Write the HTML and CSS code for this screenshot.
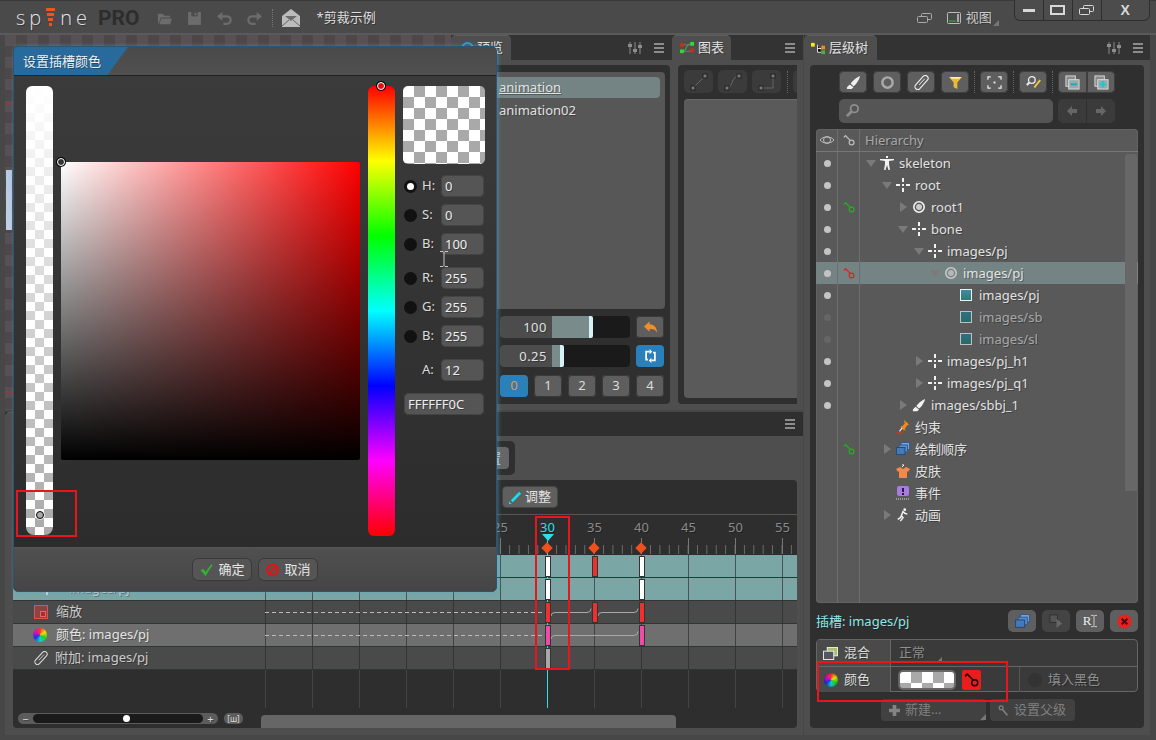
FILE: index.html
```html
<!DOCTYPE html>
<html lang="zh">
<head>
<meta charset="utf-8">
<title>Spine</title>
<link rel="stylesheet" href="styles.css">
</head>
<body>
<svg class="sprite" xmlns="http://www.w3.org/2000/svg">
  <symbol id="bone" viewBox="0 0 14 14"><path fill="currentColor" d="M0 6h4v2H0zM10 6h4v2h-4zM6 0h2v4H6zM6 10h2v4H6zM6 6h2v2H6z"/></symbol>
  <symbol id="slot" viewBox="0 0 14 14"><circle cx="7" cy="7" r="5.2" fill="none" stroke="currentColor" stroke-width="1.6"/><circle cx="7" cy="7" r="3" fill="currentColor" opacity=".75"/></symbol>
  <symbol id="key" viewBox="0 0 14 14"><path fill="none" stroke="currentColor" stroke-width="1.4" d="M1 4 3 2l6 6"/><circle cx="10" cy="10" r="2.8" fill="none" stroke="currentColor" stroke-width="1.4"/></symbol>
  <symbol id="brush" viewBox="0 0 16 16"><path fill="currentColor" d="M15 1C12 2 7 6 5 9l3 3c3-2 6-7 7-11zM4 10 1 13v2h5l2-2z"/></symbol>
  <symbol id="ring" viewBox="0 0 16 16"><circle cx="8" cy="8" r="5.5" fill="none" stroke="currentColor" stroke-width="2.6"/></symbol>
  <symbol id="clip" viewBox="0 0 16 16"><rect x="5" y="-1" width="6" height="18" rx="3" transform="rotate(42 8 8)" fill="none" stroke="currentColor" stroke-width="1.2"/><path fill="none" stroke="currentColor" d="m5.500 10.500 6-6.500"/></symbol>
  <symbol id="funnel" viewBox="0 0 16 16"><path fill="#e9b938" d="M1 2h14l-5 6v7l-4-2V8z"/><path fill="#fff0a8" d="M2 2h12l-2 2H4z"/></symbol>
  <symbol id="focus" viewBox="0 0 16 16"><path fill="none" stroke="currentColor" stroke-width="1.3" d="M1 5V2h3M12 2h3v3M15 11v3h-3M4 14H1v-3"/><rect x="7" y="7" width="2" height="2" fill="currentColor"/></symbol>
  <symbol id="magpen" viewBox="0 0 18 16"><circle cx="7" cy="5" r="4" fill="none" stroke="#eee" stroke-width="1.6"/><path stroke="#eee" stroke-width="2.400" d="M4 8 1 11"/><path stroke="#f3c63c" stroke-width="2.400" d="m17 5-7 9"/></symbol>
  <symbol id="minusdoc" viewBox="0 0 16 16"><rect x="1" y="1" width="10" height="11" fill="#8a8a8a" stroke="#ddd"/><rect x="4" y="5" width="11" height="10" fill="#9aa" stroke="#ddd"/><rect x="6" y="9" width="7" height="2" fill="#18a9c4"/></symbol>
  <symbol id="plusdoc" viewBox="0 0 16 16"><rect x="1" y="1" width="10" height="11" fill="#8a8a8a" stroke="#ddd"/><rect x="4" y="5" width="11" height="10" fill="#9aa" stroke="#ddd"/><path fill="#18c9d4" d="M6 9h2.500V6.500h2V9H13v2h-2.500v2.500h-2V11H6z"/></symbol>
  <symbol id="arrl" viewBox="0 0 12 12"><path fill="currentColor" d="M6 1v3h5v4H6v3L1 6z"/></symbol>
  <symbol id="arrr" viewBox="0 0 12 12"><path fill="currentColor" d="M6 1v3H1v4h5v3l5-5z"/></symbol>
  <symbol id="search" viewBox="0 0 16 16"><circle cx="10" cy="6" r="4" fill="none" stroke="currentColor" stroke-width="2"/><path stroke="currentColor" stroke-width="3" d="M7 9 2 14"/></symbol>
  <symbol id="eye" viewBox="0 0 16 12"><path fill="none" stroke="currentColor" d="M1 6c3-4 11-4 14 0-3 4-11 4-14 0z"/><circle cx="8" cy="6" r="3.500" fill="none" stroke="currentColor"/></symbol>
  <symbol id="skel" viewBox="0 0 14 14"><path fill="currentColor" d="M6 0h2v2H6zM0 3h14v1.200L9 5v3l1 6H8.500L7 9l-1.500 5H4l1-6V5L0 4.200z"/></symbol>
  <symbol id="pin" viewBox="0 0 14 16"><path fill="#ef8a1e" d="M8 0l6 5-2 1-3 4 1 2-3-1-3-4 2 0 3-3z"/><path stroke="#eee" stroke-width="1.300" d="M6 9 3 13"/><path fill="none" stroke="#c3410f" stroke-width="1.500" d="M0 14c1 2 6 2 8-2"/></symbol>
  <symbol id="order" viewBox="0 0 14 14"><rect x="5" y="0.500" width="8.500" height="7" fill="#7aa6de" stroke="#315a90"/><rect x="3" y="3" width="8.500" height="7" fill="#5d8ecb" stroke="#315a90"/><rect x="0.500" y="5.500" width="8.500" height="7" fill="#4579b8" stroke="#274a78"/></symbol>
  <symbol id="shirt" viewBox="0 0 14 14"><path fill="#f08a4a" d="M4 3 0 5l2 3 1-1v7h8V7l1 1 2-3-4-2-3 2z"/><path stroke="#fff" d="M6 3 8 1H6"/></symbol>
  <symbol id="event" viewBox="0 0 14 14"><rect x="1" y="0" width="12" height="10" rx="2" fill="#a97ae0"/><path fill="#2b1a40" d="M6 2h2v4H6zM6 7h2v2H6z"/><path stroke="#ddd" stroke-dasharray="1 1" d="M0 13h14"/></symbol>
  <symbol id="run" viewBox="0 0 14 16"><circle cx="9" cy="2" r="1.600" fill="currentColor"/><path fill="none" stroke="currentColor" stroke-width="1.700" d="M12 7 9 6 7 4 5 9l2 2-3 4M5 9l-1 2-3 2"/></symbol>
  <symbol id="menu" viewBox="0 0 10 10"><path fill="currentColor" d="M0 0h10v2H0zM0 4h10v2H0zM0 8h10v2H0z"/></symbol>
  <symbol id="sliders" viewBox="0 0 14 12"><path stroke="currentColor" d="M2 0v12M7 0v12M12 0v12"/><path fill="currentColor" d="M0 2h4v3H0zM5 7h4v3H5zM10 3h4v3h-4z"/></symbol>
  <symbol id="folder" viewBox="0 0 16 14"><path fill="currentColor" d="M1 2h5l2 2h6v2H4L2 12H1zM4.500 7H16l-2 6H2.500z"/></symbol>
  <symbol id="save" viewBox="0 0 14 14"><path fill="currentColor" d="M1 1h12v12H1z"/><path fill="#4a4a4a" d="M4 1h6v4H4z"/><path fill="currentColor" d="M7 2h2v2H7z"/></symbol>
  <symbol id="undo" viewBox="0 0 14 14"><path fill="none" stroke="currentColor" stroke-width="2" d="M4 5h5c5 0 5 7 0 7H6"/><path fill="currentColor" d="M5 1v8L0 5z"/></symbol>
  <symbol id="redo" viewBox="0 0 14 14"><path fill="none" stroke="currentColor" stroke-width="2" d="M10 5H5c-5 0-5 7 0 7h3"/><path fill="currentColor" d="M9 1v8l5-4z"/></symbol>
  <symbol id="mail" viewBox="0 0 18 18"><path fill="#bbb" d="M0 7 9 0l9 7v11H0z"/><path fill="#6a6a6a" d="M3 7h12l-6 5z"/><path fill="none" stroke="#666" d="M0 17l7-6M18 17l-7-6"/></symbol>
  <symbol id="win" viewBox="0 0 15 12"><rect x="4.500" y="1.500" width="10" height="6" rx="1" fill="none" stroke="currentColor"/><rect x="0.500" y="4.500" width="10" height="6" rx="1" fill="#4a4a4a" stroke="currentColor"/></symbol>
  <symbol id="view" viewBox="0 0 14 12"><rect x="0.500" y="0.500" width="13" height="11" rx="1" fill="none" stroke="#bbb"/><rect x="2" y="8" width="7" height="2" fill="#3e7f3e"/><rect x="10" y="2" width="2" height="8" fill="#aaa"/></symbol>
  <symbol id="tree" viewBox="0 0 16 12"><rect width="4" height="4" fill="#f4ec1a"/><path stroke="#eee" d="M7 2v8h4M7 6h4"/><rect x="11" y="3" width="4" height="4" fill="#ef8a1e"/><rect x="11" y="8" width="4" height="4" fill="#4caf3a"/></symbol>
  <symbol id="graph" viewBox="0 0 16 14"><path fill="none" stroke="#3ecb3e" d="M3 10c4 0 3-8 9-8"/><path stroke="#777" d="M3 3h9M3 10h9"/><rect x="0" y="8" width="4" height="4" fill="#2fdc2f"/><rect x="11" y="0" width="4" height="4" fill="#2fdc2f"/><rect x="0" y="1" width="4" height="4" fill="#c9300f"/><rect x="11" y="7" width="4" height="4" fill="#c9300f"/></symbol>
  <symbol id="back" viewBox="0 0 16 14"><path fill="#ef8f2a" d="M7 1v3c4 0 8 3 8 9-2-4-5-4-8-4v3L1 6.500z"/></symbol>
  <symbol id="loop" viewBox="0 0 16 16"><path fill="none" stroke="#fff" stroke-width="2" d="M7 3H3v9h2M9 13h4V4h-2"/><path fill="#fff" d="M7 0v6l3-3zM9 10v6l-3-3z"/></symbol>
  <symbol id="pencil" viewBox="0 0 14 14"><path stroke="#18dce8" stroke-width="3" d="M12 2 3 11"/><path fill="#18dce8" d="M0 14v-3l3 3z"/></symbol>
  <symbol id="check" viewBox="0 0 14 14"><path fill="#2fb52f" d="M1 7l3-1 2 3 6-8 1 1-7 11z"/></symbol>
  <symbol id="stop" viewBox="0 0 16 16"><circle cx="8" cy="8" r="6" fill="none" stroke="#e21414" stroke-width="2.500"/><path stroke="#e21414" stroke-width="2.500" d="m4 12 8-8"/></symbol>
  <symbol id="scale" viewBox="0 0 14 14"><rect x="0.500" y="0.500" width="13" height="13" fill="#8a4444" stroke="#e25050"/><rect x="6.500" y="6.500" width="5" height="5" fill="#a13030" stroke="#f06060"/></symbol>
  <symbol id="blend" viewBox="0 0 16 14"><rect x="4.500" y="0.500" width="11" height="9" fill="#a8c070" stroke="#eee"/><rect x="0.500" y="4.500" width="11" height="9" fill="#556" stroke="#eee"/></symbol>
  <symbol id="close" viewBox="0 0 16 16"><circle cx="8" cy="8" r="7.500" fill="#e82020"/><path stroke="#401010" stroke-width="2.200" d="m5 5 6 6M11 5l-6 6"/></symbol>
  <symbol id="dup" viewBox="0 0 16 16"><rect x="1" y="1" width="8" height="8" fill="#555" stroke="#2f2f2f"/><path fill="#666" d="M8 5l6 5-6 5z"/></symbol>
  <symbol id="plus" viewBox="0 0 12 12"><path fill="currentColor" d="M4 0h4v4h4v4H8v4H4V8H0V4h4z"/></symbol>
  <symbol id="parent" viewBox="0 0 14 14"><circle cx="4" cy="3.500" r="2.500" fill="none" stroke="currentColor" stroke-width="1.500"/><path stroke="currentColor" stroke-width="2" d="m6 6 6 7"/></symbol>
  <symbol id="ibeam" viewBox="0 0 8 16"><path fill="none" stroke="currentColor" d="M0 .5h3l1 1 1-1h3M4 1.500v13M0 15.500h3l1-1 1 1h3"/></symbol>
</svg>

<div class="app">
  <header class="topbar">
    <div class="logo"><span>sp</span><svg class="logo-i" viewBox="0 0 9 20"><path fill="#f0531c" d="M0 0h9v3H0zM1 5h7v3H1zM2 10h5v3H2zM3 15h3v3H3z"/></svg><span>ne</span></div>
    <div class="pro">PRO</div>
    <svg class="tool tool-folder"><use href="#folder"/></svg>
    <svg class="tool tool-save"><use href="#save"/></svg>
    <svg class="tool tool-undo"><use href="#undo"/></svg>
    <svg class="tool tool-redo"><use href="#redo"/></svg>
    <i class="dots"></i>
    <svg class="tool-mail"><use href="#mail"/></svg>
    <span class="doc-title">*剪裁示例</span>
    <svg class="win-ic"><use href="#win"/></svg>
    <svg class="view-ic"><use href="#view"/></svg>
    <span class="view-label">视图</span>
    <i class="corner"></i>
    <div class="winctl">
      <button class="wc"><i class="wc-min"></i></button>
      <button class="wc"><i class="wc-max"></i></button>
      <button class="wc"><svg class="wc-rest"><use href="#win"/></svg></button>
      <button class="wc wc-x">X</button>
    </div>
  </header>

  <div class="workspace">
    <div class="left">
      <div class="toprow">
        <div class="viewport"></div>

        <section class="panel preview">
          <div class="tabbar">
            <div class="tab tab-preview"><i class="eye-blue"></i><span class="tab-text">预览</span></div>
            <svg class="tb-sliders"><use href="#sliders"/></svg>
            <svg class="tb-menu"><use href="#menu"/></svg>
          </div>
          <div class="panel-body preview-body">
            <div class="inner preview-inner">
              <div class="anim-list">
                <div class="anim anim-on"><u>animation</u></div>
                <div class="anim">animation02</div>
              </div>
              <div class="ctrl ctrl-1">
                <div class="slider"><span class="sl-val">100</span><div class="sl-track"><i class="sl-fill fill-100"></i></div></div>
                <button class="cbtn"><svg class="cb-ic"><use href="#back"/></svg></button>
              </div>
              <div class="ctrl ctrl-2">
                <div class="slider"><span class="sl-val">0.25</span><div class="sl-track"><i class="sl-fill fill-25"></i></div></div>
                <button class="cbtn cbtn-blue"><svg class="cb-ic"><use href="#loop"/></svg></button>
              </div>
              <div class="ctrl ctrl-3">
                <button class="cbtn cbtn-blue num-on">0</button>
                <button class="cbtn">1</button>
                <button class="cbtn">2</button>
                <button class="cbtn">3</button>
                <button class="cbtn">4</button>
              </div>
            </div>
          </div>
        </section>

        <section class="panel graph">
          <div class="tabbar">
            <div class="tab tab-graph"><svg class="tab-ic"><use href="#graph"/></svg><span class="tab-text">图表</span></div>
            <svg class="tb-menu tb-menu-graph"><use href="#menu"/></svg>
          </div>
          <div class="panel-body graph-body">
            <div class="inner graph-inner">
              <div class="graph-tools">
                <button class="gbtn"><svg class="gb-ic" viewBox="0 0 20 20"><path stroke="#666" d="m4 16 12-12"/><rect x="2" y="14" width="4" height="4" fill="#777" stroke="#222"/><rect x="14" y="2" width="4" height="4" fill="#777" stroke="#222"/></svg></button>
                <button class="gbtn"><svg class="gb-ic" viewBox="0 0 20 20"><path fill="none" stroke="#666" d="M4 16c6 0 4-12 12-12"/><rect x="2" y="14" width="4" height="4" fill="#777" stroke="#222"/><rect x="14" y="2" width="4" height="4" fill="#777" stroke="#222"/></svg></button>
                <button class="gbtn"><svg class="gb-ic" viewBox="0 0 20 20"><path fill="none" stroke="#666" d="M4 16h12V4"/><rect x="2" y="14" width="4" height="4" fill="#777" stroke="#222"/><rect x="14" y="2" width="4" height="4" fill="#777" stroke="#222"/></svg></button>
                <i class="vdots vdots-graph"></i>
                <button class="gbtn gbtn-cut"></button>
              </div>
              <div class="graph-box"></div>
            </div>
          </div>
        </section>
      </div>

      <section class="panel timeline">
        <div class="tabbar tabbar-tl">
          <div class="tab tab-tl"></div>
          <svg class="tb-menu tb-menu-graph"><use href="#menu"/></svg>
        </div>
        <div class="tl-body">
          <div class="tl-group"><button class="tl-groupbtn">设置</button></div>
          <div class="tl-box">
            <div class="tl-toolbar"><button class="adjust"><svg class="adjust-ic"><use href="#pencil"/></svg>调整</button></div>
            <div class="tl-grid">
              <div class="ruler">
                <div class="ruler-track">
                  <div class="ruler-labels">
                    <span>25</span><span class="now">30</span><span>35</span><span>40</span><span>45</span><span>50</span><span>55</span>
                  </div>
                  <i class="dia dia-30"></i><i class="dia dia-35"></i><i class="dia dia-40"></i>
                </div>
              </div>
              <div class="row row-teal"><div class="rname"></div><div class="track">
                <i class="key k30 white"></i><i class="key k35 red"></i><i class="key k40 white"></i>
              </div></div>
              <div class="row row-teal"><div class="rname"><svg class="rn-bone"><use href="#bone"/></svg><span class="rn-text rn-t1">images/pj</span></div><div class="track">
                <i class="key k30 white"></i><i class="key k40 white"></i>
              </div></div>
              <div class="row row-dark"><div class="rname"><svg class="rn-ic"><use href="#scale"/></svg><span class="rn-text rn-t2">缩放</span></div><div class="track">
                <svg class="curve"><path class="dash" d="M0 11.500H280"/><path d="M286 15q0-3.500 4-3.500H322q4 0 4-4"/><path d="M333 15q0-3.500 4-3.500H369q4 0 4-4"/></svg>
                <i class="key k30 red"></i><i class="key k35 red"></i><i class="key k40 red"></i>
              </div></div>
              <div class="row row-mid"><div class="rname"><i class="wheel rn-wheel"></i><span class="rn-text rn-t3">颜色: images/pj</span></div><div class="track">
                <svg class="curve"><path class="dash" d="M0 11.500H280"/><path d="M286 15q0-3.500 4-3.500H369q4 0 4-4"/></svg>
                <i class="key k30 pink"></i><i class="key k40 pink"></i>
              </div></div>
              <div class="row row-dark"><div class="rname"><svg class="rn-ic"><use href="#clip"/></svg><span class="rn-text rn-t4">附加: images/pj</span></div><div class="track">
                <i class="key k30 grey"></i>
              </div></div>
              <div class="row-empty"><div class="rname"></div><div class="track"></div></div>
              <i class="playhead"></i>
              <i class="cursor"></i>
            </div>
            <div class="tl-foot">
              <div class="zoomer"><span class="z-sign">−</span><div class="z-track"><i class="z-knob"></i></div><span class="z-sign">+</span></div>
              <button class="zfit">[ш]</button>
              <div class="hscroll"></div>
            </div>
          </div>
        </div>
      </section>
    </div>

    <section class="panel right">
      <div class="tabbar">
        <div class="tab tab-tree"><svg class="tab-ic"><use href="#tree"/></svg><span class="tab-text">层级树</span></div>
        <svg class="tb-sliders tb-sliders-r"><use href="#sliders"/></svg>
        <svg class="tb-menu tb-menu-r"><use href="#menu"/></svg>
      </div>
      <div class="panel-body right-body">
        <div class="inner right-inner">
          <div class="rtools">
            <button class="rbtn"><svg class="ri"><use href="#brush"/></svg></button>
            <button class="rbtn"><svg class="ri ri-ring"><use href="#ring"/></svg></button>
            <button class="rbtn"><svg class="ri"><use href="#clip"/></svg></button>
            <button class="rbtn"><svg class="ri"><use href="#funnel"/></svg></button>
            <i class="vdots"></i>
            <button class="rbtn"><svg class="ri"><use href="#focus"/></svg></button>
            <i class="vdots"></i>
            <button class="rbtn"><svg class="ri"><use href="#magpen"/></svg></button>
            <i class="vdots"></i>
            <div class="rbtn-join">
              <button class="rbtn"><svg class="ri"><use href="#minusdoc"/></svg></button>
              <button class="rbtn"><svg class="ri"><use href="#plusdoc"/></svg></button>
            </div>
          </div>
          <div class="rsearch">
            <div class="searchbox"><svg class="search-ic"><use href="#search"/></svg></div>
            <div class="navbtns"><button class="nav"><svg class="nav-ic"><use href="#arrl"/></svg></button><button class="nav"><svg class="nav-ic"><use href="#arrr"/></svg></button></div>
          </div>

          <div class="tree">
            <div class="tr tr-head">
              <div class="c-eye"><svg class="h-eye"><use href="#eye"/></svg></div>
              <div class="c-key"><svg class="h-key"><use href="#key"/></svg></div>
              <div class="c-name head-name">Hierarchy</div>
            </div>
            <div class="tr"><div class="c-eye"><i class="dot"></i></div><div class="c-key"></div><div class="c-name d0"><i class="ar ar-down"></i><svg class="ti"><use href="#skel"/></svg><span class="tl">skeleton</span></div></div>
            <div class="tr"><div class="c-eye"><i class="dot"></i></div><div class="c-key"></div><div class="c-name d1"><i class="ar ar-down"></i><svg class="ti"><use href="#bone"/></svg><span class="tl">root</span></div></div>
            <div class="tr"><div class="c-eye"><i class="dot"></i></div><div class="c-key"><svg class="tkey green"><use href="#key"/></svg></div><div class="c-name d2"><i class="ar ar-right"></i><svg class="ti"><use href="#slot"/></svg><span class="tl">root1</span></div></div>
            <div class="tr"><div class="c-eye"><i class="dot"></i></div><div class="c-key"></div><div class="c-name d2"><i class="ar ar-down"></i><svg class="ti"><use href="#bone"/></svg><span class="tl">bone</span></div></div>
            <div class="tr"><div class="c-eye"><i class="dot"></i></div><div class="c-key"></div><div class="c-name d3"><i class="ar ar-down"></i><svg class="ti"><use href="#bone"/></svg><span class="tl">images/pj</span></div></div>
            <div class="tr tr-on"><div class="c-eye"><i class="dot"></i></div><div class="c-key"><svg class="tkey redk"><use href="#key"/></svg></div><div class="c-name d4"><i class="ar ar-down"></i><svg class="ti ti-grey"><use href="#slot"/></svg><span class="tl">images/pj</span></div></div>
            <div class="tr"><div class="c-eye"><i class="dot"></i></div><div class="c-key"></div><div class="c-name d5"><i class="ar ar-none"></i><i class="att"></i><span class="tl">images/pj</span></div></div>
            <div class="tr"><div class="c-eye"><i class="dot dot-off"></i></div><div class="c-key"></div><div class="c-name d5"><i class="ar ar-none"></i><i class="att att-dim"></i><span class="tl tl-dim">images/sb</span></div></div>
            <div class="tr"><div class="c-eye"><i class="dot dot-off"></i></div><div class="c-key"></div><div class="c-name d5"><i class="ar ar-none"></i><i class="att att-dim"></i><span class="tl tl-dim">images/sl</span></div></div>
            <div class="tr"><div class="c-eye"><i class="dot"></i></div><div class="c-key"></div><div class="c-name d3"><i class="ar ar-right"></i><svg class="ti"><use href="#bone"/></svg><span class="tl">images/pj_h1</span></div></div>
            <div class="tr"><div class="c-eye"><i class="dot"></i></div><div class="c-key"></div><div class="c-name d3"><i class="ar ar-right"></i><svg class="ti"><use href="#bone"/></svg><span class="tl">images/pj_q1</span></div></div>
            <div class="tr"><div class="c-eye"><i class="dot"></i></div><div class="c-key"></div><div class="c-name d2"><i class="ar ar-right"></i><svg class="ti"><use href="#brush"/></svg><span class="tl">images/sbbj_1</span></div></div>
            <div class="tr"><div class="c-eye"></div><div class="c-key"></div><div class="c-name d1"><i class="ar ar-none"></i><svg class="ti"><use href="#pin"/></svg><span class="tl">约束</span></div></div>
            <div class="tr"><div class="c-eye"></div><div class="c-key"><svg class="tkey green"><use href="#key"/></svg></div><div class="c-name d1"><i class="ar ar-right"></i><svg class="ti"><use href="#order"/></svg><span class="tl">绘制顺序</span></div></div>
            <div class="tr"><div class="c-eye"></div><div class="c-key"></div><div class="c-name d1"><i class="ar ar-none"></i><svg class="ti"><use href="#shirt"/></svg><span class="tl">皮肤</span></div></div>
            <div class="tr"><div class="c-eye"></div><div class="c-key"></div><div class="c-name d1"><i class="ar ar-none"></i><svg class="ti"><use href="#event"/></svg><span class="tl">事件</span></div></div>
            <div class="tr"><div class="c-eye"></div><div class="c-key"></div><div class="c-name d1"><i class="ar ar-right"></i><svg class="ti"><use href="#run"/></svg><span class="tl">动画</span></div></div>
            <div class="tr tr-fill"><div class="c-eye"></div><div class="c-key"></div><div class="c-name"></div></div>
            <i class="vscroll"></i>
          </div>

          <div class="slotbar">
            <span class="slot-label">插槽: images/pj</span>
            <button class="sbtn"><svg class="si"><use href="#order"/></svg></button>
            <button class="sbtn sbtn-off"><svg class="si"><use href="#dup"/></svg></button>
            <button class="sbtn sbtn-r">R<svg class="si-beam"><use href="#ibeam"/></svg></button>
            <button class="sbtn"><svg class="si"><use href="#close"/></svg></button>
          </div>

          <div class="props">
            <div class="prow">
              <div class="plabel"><svg class="p-ic"><use href="#blend"/></svg>混合</div>
              <div class="pval pval-blend">正常<i class="corner corner-p"></i></div>
            </div>
            <div class="prow prow-2">
              <div class="plabel"><i class="wheel p-wheel"></i>颜色</div>
              <div class="pval pval-color"><i class="swatch"></i><button class="redkey"><svg class="redkey-ic"><use href="#key"/></svg></button></div>
              <div class="pval pval-fill"><i class="fillbox"></i><span>填入黑色</span></div>
            </div>
          </div>

          <div class="newbar">
            <button class="nbtn nbtn-new"><svg class="n-ic"><use href="#plus"/></svg>新建...<i class="corner corner-n"></i></button>
            <button class="nbtn nbtn-par"><svg class="n-ic"><use href="#parent"/></svg>设置父级</button>
          </div>
        </div>
      </div>
    </section>
  </div>

  <div class="dialog">
    <div class="dlg-head"><div class="dlg-title">设置插槽颜色</div></div>
    <div class="dlg-body">
      <div class="alpha"><i class="handle h-alpha"></i></div>
      <div class="sv"><i class="handle h-sv"></i></div>
      <div class="hue"><i class="handle h-hue"></i></div>
      <div class="dlg-side">
        <div class="swatch-big"></div>
        <div class="crow crow-first"><i class="radio radio-on"></i><label>H:</label><span class="cinput">0</span></div>
        <div class="crow"><i class="radio"></i><label>S:</label><span class="cinput">0</span></div>
        <div class="crow"><i class="radio"></i><label>B:</label><span class="cinput">100</span></div>
        <div class="crow crow-gap"><i class="radio"></i><label>R:</label><span class="cinput">255</span></div>
        <div class="crow"><i class="radio"></i><label>G:</label><span class="cinput">255</span></div>
        <div class="crow"><i class="radio"></i><label>B:</label><span class="cinput">255</span></div>
        <div class="crow crow-gap"><i class="radio radio-none"></i><label>A:</label><span class="cinput">12</span></div>
        <div class="crow crow-gap"><span class="cinput cinput-hex">FFFFFF0C</span></div>
      </div>
    </div>
    <div class="dlg-foot">
      <button class="dbtn"><svg class="d-ic"><use href="#check"/></svg>确定</button>
      <button class="dbtn"><svg class="d-ic"><use href="#stop"/></svg>取消</button>
    </div>
    <svg class="dlg-beam"><use href="#ibeam"/></svg>
  </div>

  <i class="redbox rb-alpha"></i>
  <i class="redbox rb-key"></i>
  <i class="redbox rb-prop"></i>
</div>
</body>
</html>
```
FILE: styles.css
```css
*{box-sizing:border-box}
html,body{margin:0;padding:0;height:100%;background:#454545}
body{font:13px/1.2 "Noto Sans","Noto Sans CJK SC",sans-serif;color:#e2e2e2}
.sprite{display:block;width:0;height:0;overflow:hidden}
svg{display:block;flex:none}
button{font:inherit;color:inherit;border:0;padding:0;margin:0}
i{display:block;font-style:normal}
.app{width:1156px;height:740px;position:relative;overflow:hidden;display:flex;flex-direction:column;background:#474747;text-shadow:1px 1px 0 rgba(0,0,0,.3)}

/* top bar */
.topbar{height:35px;flex:none;display:flex;align-items:center;background:#4a4a4a;border-top:1px solid #3a3a3a;border-bottom:2px solid #5a5a5a;padding:2px 0 0 16px;position:relative}
.logo{display:flex;align-items:center;width:70px;flex:none;font:300 20px/1 "Open Sans",sans-serif;letter-spacing:4px;color:#e4e4e4}
.logo-i{width:9px;height:20px;margin:0 5px 0 1px}
.pro{margin-left:12px;font:700 21px/1 Roboto,sans-serif;color:#2d2d2d;text-shadow:none}
.tool{color:#6c6c6c;width:15px;height:15px}
.tool-folder{margin-left:18px}
.tool-save{margin-left:15px}
.tool-undo{margin-left:15px}
.tool-redo{margin-left:15px}
.dots{width:0;height:18px;border-left:1px dotted #777;margin-left:10px}
.tool-mail{width:18px;height:18px;margin-left:9px}
.doc-title{margin-left:16px;color:#dfdfdf}
.win-ic{width:15px;height:12px;color:#aaa;margin-left:541px}
.view-ic{width:14px;height:12px;margin-left:15px}
.view-label{margin-left:5px;color:#ccc}
.corner{width:0;height:0;border-style:solid;border-width:0 0 6px 6px;border-color:transparent transparent #777 transparent}
.topbar>.corner{margin:10px 0 0 1px}
.winctl{margin-left:15px;align-self:flex-start;margin-top:-3px;display:flex;height:21px;background:#2e2e2e;border-radius:0 0 6px 6px;padding:0 1px 1px;gap:1px}
.wc{width:28px;height:20px;background:#4c4c4c;display:flex;align-items:center;justify-content:center;color:#d8d8d8}
.wc:first-child{border-radius:0 0 0 5px}
.wc-x{width:47px;border-radius:0 0 5px 0;font:700 14px/1 "Liberation Sans",sans-serif}
.wc-min{width:12px;height:3px;background:#d8d8d8}
.wc-max{width:15px;height:10px;border:2px solid #d8d8d8}
.wc-rest{width:15px;height:12px}

/* workspace */
.workspace{flex:1;min-height:0;display:flex;gap:1px;padding:0 6px 5px 5px}
.left{width:798px;display:flex;flex-direction:column;gap:2px}
.toprow{height:375px;display:flex;flex:none}
.viewport{width:446px;background:
  linear-gradient(#b8c9e2,#c2cfe3) no-repeat 1px 135px/6px 60px,
  linear-gradient(#8a3c3c,#8a3c3c) no-repeat 1px 68px/7px 2px,
  linear-gradient(#8a3c3c,#8a3c3c) no-repeat 1px 357px/7px 2px,
  repeating-conic-gradient(#4d4749 0 25%,#575055 0 50%) 0 0/22px 22px}
.panel{display:flex;flex-direction:column;min-width:0}
.tabbar{height:25px;flex:none;display:flex;align-items:center;background:#333;position:relative}
.tab{height:25px;background:#4e4e4e;border-radius:5px 5px 0 0;display:flex;align-items:center;border-top:1px solid #5c5c5c;flex:none}
.tab-text{white-space:nowrap}
.tab-ic{width:15px;height:13px}
.tb-menu{width:10px;height:10px;color:#8c8c8c}
.tb-sliders{width:14px;height:12px;color:#8c8c8c}
.panel-body{flex:1;min-height:0;background:#4e4e4e;display:flex}
.inner{flex:1;min-width:0;background:#2f2f2f;border-radius:4px}

/* preview */
.preview{width:221px}
.tab-preview{width:60px;padding-left:10px;gap:3px}
.eye-blue{width:13px;height:13px;border-radius:50%;border:2px solid #2a9ad8;flex:none}
.preview .tb-sliders{margin-left:117px}
.preview .tb-menu{margin-left:12px}
.preview-body{padding:5px 2px 6px 6px}
.preview-inner{padding:7px 5px 0;display:flex;flex-direction:column}
.anim-list{height:237px;background:#575757;border-radius:4px;padding:5px 5px 0 0}
.anim{height:22px;padding-left:37px;line-height:22px}
.anim-on{height:21px;background:#748383;border-radius:0 4px 4px 0;line-height:21px;margin-bottom:1px}
.ctrl{display:flex;width:164px;align-self:flex-end;margin-right:1px;justify-content:space-between}
.ctrl-1{margin-top:7px}
.ctrl-2{margin-top:7px}
.ctrl-3{margin-top:8px}
.slider{width:130px;height:22px;display:flex;border-radius:4px;overflow:hidden;background:#1a1a1a}
.sl-val{width:52px;background:#4c4c4c;text-align:right;padding-right:5px;line-height:22px;letter-spacing:.5px}
.sl-track{flex:1}
.sl-fill{height:22px;background:#7a8b8b;border-right:4px solid #d6f0f6;border-radius:0 2px 2px 0}
.fill-100{width:41px}
.fill-25{width:12px}
.cbtn{width:28px;height:22px;background:#5e5e5e;border-radius:4px;box-shadow:0 0 0 1px #393939 inset;display:flex;align-items:center;justify-content:center;color:#ddd}
.cbtn-blue{background:#2a80ba;box-shadow:none}
.num-on{color:#e8962e}
.cb-ic{width:15px;height:14px}

/* graph */
.graph{width:131px}
.tab-graph{width:59px;padding-left:8px;gap:3px}
.tb-menu-graph{margin-left:auto;margin-right:8px}
.graph-body{padding:5px 6px 6px}
.graph-inner{padding:5px 0 0 6px;display:flex;flex-direction:column;overflow:hidden;border-radius:4px 0 0 4px}
.graph-tools{display:flex;gap:5px;height:23px;align-items:center}
.gbtn{width:29px;height:23px;flex:none;background:#3b3b3b;border-radius:5px;display:flex;align-items:center;justify-content:center}
.gb-ic{width:20px;height:20px}
.vdots{width:0;height:22px;border-left:1px dotted #666;flex:none}
.vdots-graph{margin-left:1px}
.gbtn-cut{margin-left:0}
.graph-box{height:299px;margin-top:6px;background:#5a5a5a;border-top:1px solid #6a6a6a;border-radius:4px 0 0 4px}

/* timeline */
.timeline{flex:1;min-height:0}
.tabbar-tl{height:24px;background:#2f2f2f}
.tab-tl{width:110px;height:24px}
.tl-body{flex:1;min-height:0;background:#4e4e4e;padding:5px 6px 7px 8px;display:flex;flex-direction:column}
.tl-group{width:502px;height:34px;background:#2f2f2f;border-radius:0 5px 5px 0;padding:6px 6px 0 0;display:flex;justify-content:flex-end;flex:none}
.tl-groupbtn{width:70px;height:22px;background:#666;border-radius:4px;text-align:left;padding-left:36px;line-height:22px;color:#ddd;white-space:nowrap;overflow:hidden}
.tl-box{margin-top:5px;flex:1;min-height:0;background:#2e2e2e;border-radius:4px;display:flex;flex-direction:column}
.tl-toolbar{height:35px;flex:none;border-bottom:1px solid #555;padding:6px 0 0 489px}
.adjust{height:22px;width:56px;background:#5f5f5f;border-radius:5px;display:flex;align-items:center;padding-left:7px;gap:3px;color:#e4e4e4;box-shadow:0 0 0 1px #454545 inset}
.adjust-ic{width:13px;height:13px}
.tl-grid{position:relative;flex:none}
.ruler{height:40px;padding-left:252px}
.ruler-track{height:39px;position:relative;background:
  linear-gradient(to right,#777 1px,transparent 1px) 0 100%/47px 16px repeat-x,
  linear-gradient(to right,#6c6c6c 1px,transparent 1px) 0 100%/9.400px 9px repeat-x}
.ruler-labels{display:flex;padding:3px 0 0 212px;color:#8a8a8a;line-height:18px;overflow:hidden}
.ruler-labels span{width:47px;flex:none;text-align:center}
.ruler-labels .now{color:#2de0e8}
.dia{position:absolute;width:8px;height:8px;top:29px;background:#f0501e;transform:rotate(45deg);z-index:2}
.dia-30{left:278px}
.dia-35{left:325px}
.dia-40{left:372px}
.row{height:23px;display:flex;border-bottom:1px solid #2f3535}
.row-teal{background:#7aa6a6}
.row-dark{background:#4a4a4a}
.row-mid{background:#6f6f6f}
.rname{width:252px;flex:none;display:flex;align-items:center;color:#ccc;position:relative}
.rn-bone{width:12px;height:12px;color:#ddd;margin-left:28px}
.rn-ic{width:14px;height:14px;margin-left:21px;color:#ddd}
.rn-wheel{margin-left:20px}
.rn-text{white-space:nowrap}
.rn-t1{margin-left:16px}
.rn-t2{margin-left:8px}
.rn-t3{margin-left:9px;color:#e4e4e4}
.rn-t4{margin-left:7px}
.track{flex:1;position:relative;background:linear-gradient(to right,rgba(40,40,40,.65) 1px,transparent 1px) 0 0/47px 100%}
.key{position:absolute;top:1px;width:6px;height:21px;border:1px solid #333;z-index:2}
.k30{left:280px}
.k35{left:327px}
.k40{left:374px}
.white{background:#fff}
.red{background:#f03030}
.pink{background:#f04aa8}
.grey{background:#a8a8a8}
.curve{position:absolute;left:0;top:0;width:100%;height:22px;fill:none;stroke:#a8a8a8}
.curve .dash{stroke:#bbb;stroke-dasharray:4 3}
.row-empty{height:38px;display:flex}
.row-empty .track{background-image:linear-gradient(to right,#444 1px,transparent 1px)}
.playhead{position:absolute;left:534px;top:26px;bottom:0;width:1px;background:#2de0e8;z-index:1}
.cursor{position:absolute;left:529px;top:19px;width:0;height:0;border:6px solid transparent;border-top:7px solid #2de0e8;border-bottom:0;z-index:3}
.tl-foot{flex:1;display:flex;align-items:flex-start;padding:5px 0 0 5px}
.zoomer{width:200px;height:11px;margin-top:0;background:#5c5c5c;border-radius:6px;display:flex;align-items:center;justify-content:space-between;padding:0 4px;color:#ddd;font-size:11px;line-height:11px}
.z-sign{width:7px;text-align:center}
.z-track{width:170px;height:9px;background:#1a1a1a;border-radius:5px;position:relative;margin:0 4px}
.z-knob{position:absolute;left:90px;top:1px;width:7px;height:7px;border-radius:50%;background:#fff}
.zfit{width:19px;height:11px;margin-left:6px;background:#5c5c5c;border-radius:5px;font-size:8px;line-height:11px;color:#ddd}
.hscroll{width:415px;height:13px;margin:2px 0 0 18px;background:#666;border-radius:4px 4px 0 0}

/* right */
.right{width:346px}
.tab-tree{width:73px;padding-left:7px;gap:3px}
.tb-sliders-r{margin-left:230px}
.tb-menu-r{margin-left:12px}
.right-body{padding:5px 6px 7px}
.right-inner{display:flex;flex-direction:column;padding:6px 6px 0}
.rtools{display:flex;gap:6px;padding-left:23px;height:22px;align-items:center}
.rbtn{width:28px;height:22px;background:#5f5f5f;border-radius:5px;box-shadow:0 0 0 1px #3f3f3f inset;display:flex;align-items:center;justify-content:center;color:#eee;flex:none}
.ri{width:15px;height:15px}
.ri-ring{color:#aaa}
.rtools .vdots{margin:0 -1px}
.rbtn-join{display:flex}
.rbtn-join .rbtn:first-child{border-radius:5px 0 0 5px;width:29px}
.rbtn-join .rbtn:last-child{border-radius:0 5px 5px 0}
.rsearch{display:flex;gap:5px;padding-left:23px;height:24px;margin-top:6px}
.searchbox{width:214px;background:#555;border-radius:5px;padding:4px 0 0 6px}
.search-ic{width:15px;height:15px;color:#8d8d8d}
.navbtns{display:flex;width:57px;background:#3b3b3b;border-radius:5px}
.nav{flex:1;background:none;display:flex;align-items:center;justify-content:center;color:#666}
.nav + .nav{border-left:1px solid #2f2f2f}
.nav-ic{width:12px;height:12px}
.tree{position:relative;height:474px;margin-top:6px;background:#595959;border-radius:4px;display:flex;flex-direction:column;flex:none;overflow:hidden;box-shadow:0 0 0 1px #626262 inset}
.tr{height:22px;display:flex;align-items:stretch;flex:none}
.tr-head{height:23px;border-bottom:1px solid #777;color:#aaa}
.tr-on{background:#748383}
.tr-fill{flex:1}
.c-eye,.c-key{width:22px;flex:none;border-right:1px solid #6e6e6e;display:flex;align-items:center;justify-content:center}
.c-eye{padding-left:1px}
.c-name{flex:1;display:flex;align-items:center;min-width:0}
.head-name{padding:1px 0 0 5px;color:#a8a8a8}
.h-eye{width:16px;height:12px;color:#bbb}
.h-key,.tkey{width:12px;height:12px}
.h-key{color:#bbb}
.green{color:#22b022}
.redk{color:#e02020}
.dot{width:7px;height:7px;border-radius:50%;background:#c4c4c4}
.dot-off{background:#666}
.d0{padding-left:6px}
.d1{padding-left:22px}
.d2{padding-left:38px}
.d3{padding-left:54px}
.d4{padding-left:70px}
.d5{padding-left:86px}
.ar{width:10px;height:10px;flex:none;margin-right:4px;position:relative}
.ar-down::after{content:"";position:absolute;left:0;top:2px;border:5px solid transparent;border-top:7px solid #7a7a7a;border-bottom:0}
.ar-right::after{content:"";position:absolute;left:2px;top:0;border:5px solid transparent;border-left:7px solid #7a7a7a;border-right:0}
.ti{width:14px;height:14px;color:#f2f2f2}
.ti-grey{color:#c8c8c8}
.tl{margin:2px 0 0 5px;white-space:nowrap}
.tl-dim{color:#a8a8a8}
.att{width:12px;height:12px;flex:none;margin:0 2px 0 0;background:linear-gradient(#3a8fa8,#2f7a70);border:1px solid #f0f0f0}
.att-dim{border-color:#c0c0c0;background:linear-gradient(#2d7088,#2a6a62)}
.vscroll{position:absolute;left:309px;top:25px;width:12px;height:337px;background:#676767;border-radius:3px 3px 0 0}
.slotbar{display:flex;align-items:center;height:22px;margin-top:7px;gap:6px}
.slot-label{color:#8fe8ea;margin-right:auto;padding-top:1px}
.sbtn{width:28px;height:22px;background:#5f5f5f;border-radius:5px;display:flex;align-items:center;justify-content:center}
.sbtn-off{background:#444}
.sbtn-r{font:13px "Liberation Serif",serif;color:#eee}
.si{width:15px;height:15px}
.si-beam{width:6px;height:14px;color:#eee}
.props{margin-top:7px;height:53px;border:1px solid #666;border-radius:4px;background:#3a3a3a;flex:none}
.prow{height:26px;display:flex}
.prow-2{border-top:1px solid #666}
.plabel{width:74px;flex:none;display:flex;align-items:center;gap:6px;padding-left:6px;background:#4a4a4a;border-right:1px solid #666;color:#ddd}
.p-ic{width:15px;height:13px}
.pval{display:flex;align-items:center;position:relative}
.pval-blend{padding-left:8px;color:#8f8f8f;width:51px;white-space:nowrap}
.corner-p{position:absolute;right:0;bottom:3px}
.pval-color{width:129px;padding-left:7px;gap:6px;border-right:1px solid #555}
.swatch{width:58px;height:20px;border:2px solid #666;border-radius:5px;background:repeating-conic-gradient(#a9a9a9 0 25%,#fff 0 50%) 0 0/22px 22px}
.redkey{width:19px;height:20px;background:#ea1c1c;border-radius:2px;display:flex;align-items:center;justify-content:center;color:#180404}
.redkey-ic{width:15px;height:15px}
.pval-fill{padding-left:8px;gap:6px;color:#8f8f8f}
.fillbox{width:14px;height:14px;background:#333;border-radius:50%}
.newbar{display:flex;gap:4px;margin-top:7px;padding-left:65px}
.nbtn{height:22px;background:#414141;border-radius:4px;display:flex;align-items:center;color:#7f7f7f;position:relative}
.nbtn-new{width:105px;padding-left:8px;gap:5px}
.nbtn-par{width:85px;padding-left:8px;gap:5px}
.n-ic{width:11px;height:11px;color:#848484}
.corner-n{position:absolute;right:0;bottom:1px}
.wheel{border-radius:50%;background:conic-gradient(#ff3030,#f0e000,#20d020,#10d0d0,#2030e0,#d010c0,#ff3030);width:14px;height:14px;flex:none}
.p-wheel{margin-left:1px;box-shadow:inset 0 0 3px rgba(0,0,0,.5)}

/* dialog */
.dialog{position:absolute;left:13px;top:46px;width:484px;height:546px;background:#333;border:1px solid #2a5673;border-radius:5px;box-shadow:1px 0 4px rgba(85,165,205,.55);display:flex;flex-direction:column;overflow:hidden;z-index:5}
.dlg-head{height:29px;flex:none;background:linear-gradient(#4a4a4a,#505050);border-bottom:1px solid #222}
.dlg-title{width:114px;height:28px;background:#276a9b;clip-path:polygon(0 0,100% 0,82% 100%,0 100%);padding:0 0 0 9px;line-height:28px;color:#f0f0f0}
.dlg-body{flex:1;min-height:0;display:flex;gap:8px;padding:10px 0 0 12px;background:linear-gradient(#3b3b3b,#2c2c2c)}
.alpha{width:27px;height:449px;flex:none;position:relative;border-radius:6px 6px 8px 8px;background:linear-gradient(#fff,rgba(255,255,255,0)),repeating-conic-gradient(#a9a9a9 0 25%,#fff 0 50%) 0 0/18px 18px}
.sv{width:299px;height:298px;margin-top:76px;flex:none;position:relative;border-radius:2px;background:linear-gradient(to top,#000,rgba(0,0,0,0)),linear-gradient(to right,#fff,#f00)}
.hue{width:27px;height:450px;flex:none;position:relative;border-radius:6px;background:linear-gradient(#f00,#ff0 16.67%,#0f0 33.33%,#0ff 50%,#00f 66.67%,#f0f 83.33%,#f00)}
.handle{position:absolute;width:8px;height:8px;border-radius:50%;border:1px solid #fff;box-shadow:0 0 0 1px #000}
.h-alpha{left:10px;top:425px;background:#aaa;border-color:#000;box-shadow:0 0 0 1px rgba(255,255,255,.7)}
.h-sv{left:-4px;top:-4px;background:#333}
.h-hue{left:9px;top:-4px;background:#e01010}
.dlg-side{width:82px;flex:none}
.swatch-big{height:78px;border-radius:5px;background:repeating-conic-gradient(#a9a9a9 0 25%,#fff 0 50%) 0 0/22px 22px}
.crow{display:flex;align-items:center;height:22px;margin-top:7px;color:#ddd}
.crow-first{margin-top:11px}
.crow-gap{margin-top:12px}
.crow label{width:19px;margin-left:5px}
.radio{width:13px;height:13px;margin-left:1px;border-radius:50%;background:#111;flex:none;position:relative}
.radio-on::after{content:"";position:absolute;left:3px;top:3px;width:7px;height:7px;border-radius:50%;background:#fff}
.radio-none{background:none}
.cinput{width:43px;height:22px;background:#555;border-radius:5px;padding-left:4px;line-height:22px;color:#eee;box-shadow:0 0 0 1px #444 inset}
.cinput-hex{width:80px;padding-left:4px;margin-left:1px}
.dlg-foot{height:44px;flex:none;background:linear-gradient(#505050,#454545);border-top:1px solid #555;display:flex;justify-content:center;gap:6px;padding-top:10px}
.dbtn{width:60px;height:23px;background:#555;border-radius:6px;box-shadow:0 0 0 1px #3a3a3a inset;display:flex;align-items:center;justify-content:center;gap:4px;color:#e6e6e6}
.d-ic{width:15px;height:14px}
.dlg-beam{position:absolute;left:426px;top:204px;width:8px;height:16px;color:#c8c8c8}

.redbox{position:absolute;border:2px solid #e8151c;z-index:6}
.rb-alpha{left:16px;top:490px;width:61px;height:47px}
.rb-key{left:535px;top:516px;width:35px;height:154px}
.rb-prop{left:817px;top:661px;width:191px;height:41px}
```
